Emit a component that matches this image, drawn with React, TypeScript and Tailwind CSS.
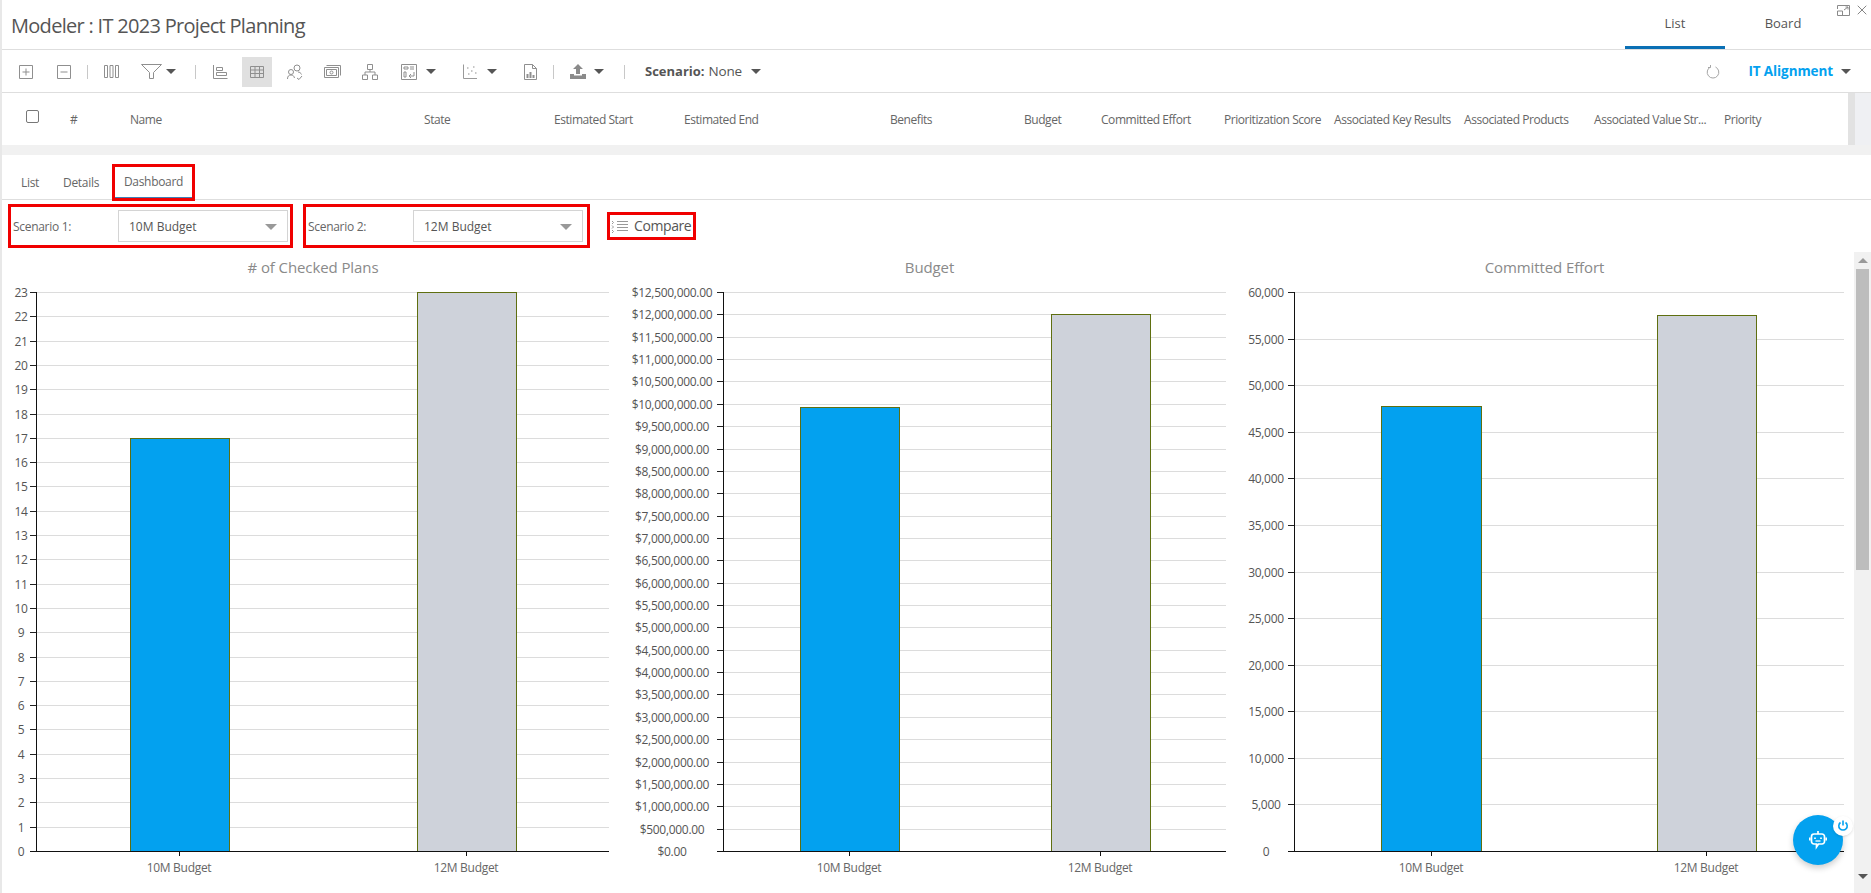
import { ReactNode } from "react";
import { X } from "lucide-react";

const font = "font-['Open_Sans','Noto_Sans',sans-serif]";

/* ---------------------- Toolbar icons ---------------------- */
function Ico({ w = 16, h = 16, children }: { w?: number; h?: number; children: ReactNode }) {
  return (
    <svg width={w} height={h} viewBox={`0 0 ${w} ${h}`} fill="none" stroke="#8f8f8f" strokeWidth="1" className="shrink-0">
      {children}
    </svg>
  );
}

function Caret({ className = "" }: { className?: string }) {
  return <span className={`inline-block w-0 h-0 border-x-[5px] border-x-transparent border-t-[5px] border-t-[#555] ${className}`} />;
}

function Sep() {
  return <span className="w-px h-[14px] bg-[#c8c8c8] shrink-0" />;
}

function Toolbar() {
  return (
    <div className="flex items-center h-[43px] pt-[1px] border-b border-[#dedede] pr-[20px] text-[#555]">
      <div className="ml-[17px] w-[38px]">
        <Ico w={14} h={14}><path d="M.5.5h13v13H.5zM7 3.500v7M3.500 7h7" /></Ico>
      </div>
      <div className="w-[30px]">
        <Ico w={14} h={14}><path d="M.5.5h13v13H.5zM3.500 7h7" /></Ico>
      </div>
      <Sep />
      <div className="ml-[16px] w-[37px]">
        <Ico w={15} h={13}><path d="M.5.5h3v12h-3zM6 .5h3v12H6zM11.500.5h3v12h-3z" /></Ico>
      </div>
      <div className="flex items-center w-[54px]">
        <Ico w={22} h={15}><path d="M.5.5h20l-8 8v6h-4v-6z" /></Ico>
        <Caret className="ml-[3px]" />
      </div>
      <Sep />
      <div className="ml-[17px] w-[29px]">
        <Ico w={15} h={14}><path d="M.5 0v13.500h14M3.500 2.500h6v3h-6zM3.500 7.500h10v3h-10z" /></Ico>
      </div>
      <div className="flex items-center justify-center w-[30px] h-[30px] bg-[#e0e0e0]">
        <Ico w={14} h={12}><path d="M.5.5h13v11H.5zM.5 4h13M.5 7.500h13M5 .5v11M9.500.5v11" /></Ico>
      </div>
      <div className="ml-[15px] w-[37px]">
        <Ico w={16} h={16}><circle cx="10" cy="4" r="3" /><circle cx="4" cy="8" r="2.500" /><path d="M.5 15c0-3 1.500-4 3.500-4s3 1 3.500 3M10 14l2 1.500 3-3.500M11 8c1.500 0 3 1 3.500 2.500" /></Ico>
      </div>
      <div className="w-[38px]">
        <Ico w={17} h={13}><path d="M2.500.5h14v10M.5 2.500h14v10H.5zM2.500 4.500h10v6h-10z" /><circle cx="7.500" cy="7.500" r="1.500" /></Ico>
      </div>
      <div className="w-[39px]">
        <Ico w={16} h={16}><path d="M5.500.5h5v5h-5zM8 5.500V8M3 11V8h10v3M.5 11h5v4.500h-5zM10.500 11h5v4.500h-5z" /></Ico>
      </div>
      <div className="flex items-center w-[62px]">
        <Ico w={16} h={16}><path d="M.5.5h15v15H.5zM3 3h4v2H3zM9 3h4M9 5h4M3 8h2v5H3zM8 12h5V8M8 12l2-2M8 12l2 2" /></Ico>
        <Caret className="ml-[9px]" />
      </div>
      <div className="flex items-center w-[61px]">
        <Ico w={14} h={15}><path d="M.5.500v14h14" stroke="#9a9a9a" /><path d="M4 4h1.500M10 3h1.500M8 7h1.500M5 10h1.500M12 9h1.500" /></Ico>
        <Caret className="ml-[10px]" />
      </div>
      <div className="w-[29px]">
        <Ico w={13} h={16}><path d="M.5.500h8l4 4v11H.5zM8.500.500v4h4" /><path d="M3.500 14V10M6.500 14V8M9.500 14V11" strokeWidth="2" /></Ico>
      </div>
      <Sep />
      <div className="flex items-center ml-[16px] w-[54px]">
        <svg width="16" height="15" viewBox="0 0 16 15" fill="#8a8a8a" className="shrink-0"><path d="M8 0l5 5H10v5H6V5H3zM0 10h4v1.500h8V10h4v5H0z" /></svg>
        <Caret className="ml-[8px]" />
      </div>
      <Sep />
      <div className={`flex items-center ml-[20px] text-[13px] ${font}`}>
        <span className="font-bold">Scenario:</span>
        <span className="ml-[4px] text-[13.5px] tracking-[-0.2px]">None</span>
        <Caret className="ml-[9px]" />
      </div>
      <div className="ml-auto flex items-center">
        <svg width="14" height="15" viewBox="0 0 14 15" fill="none" stroke="#a5a5a5"><path d="M9.500 3A5.800 5.800 0 1 1 4.500 3M4.500 1v2.500H2" /></svg>
        <span className={`ml-[28px] text-[13.5px] font-bold tracking-[-0.1px] text-[#03a1ef] ${font}`}>IT Alignment</span>
        <Caret className="ml-[8px]" />
      </div>
    </div>
  );
}

/* ---------------------- Table header ---------------------- */
const columns = [
  { label: "#", w: "w-[60px]" },
  { label: "Name", w: "w-[294px]" },
  { label: "State", w: "w-[130px]" },
  { label: "Estimated Start", w: "w-[130px]" },
  { label: "Estimated End", w: "w-[206px]" },
  { label: "Benefits", w: "w-[134px]" },
  { label: "Budget", w: "w-[77px]" },
  { label: "Committed Effort", w: "w-[123px]" },
  { label: "Prioritization Score", w: "w-[110px]" },
  { label: "Associated Key Results", w: "w-[130px]" },
  { label: "Associated Products", w: "w-[130px]" },
  { label: "Associated Value Str...", w: "w-[130px]" },
  { label: "Priority", w: "w-[60px]" },
];

function TableHeader() {
  return (
    <div className="flex h-[52px]">
      <div className={`flex-1 flex items-center pl-[24px] pt-[2px] text-[12px] text-[#666] tracking-[-0.45px] ${font}`}>
        <span className="w-[13px] h-[13px] border border-[#777] rounded-[2px] -mt-[7px] mr-[31px] shrink-0" />
        {columns.map((c) => (
          <span key={c.label} className={`${c.w} shrink-0 whitespace-nowrap`}>{c.label}</span>
        ))}
      </div>
      <div className="w-[7px] bg-[#e2e2e2]" />
      <div className="w-[16px] bg-[#eff0f3]" />
    </div>
  );
}

/* ---------------------- Charts ---------------------- */
type ChartProps = {
  title: string;
  width: number;
  axisX: number;
  endX: number;
  labelX: number;
  ticks: string[];
  bars: { x: number; w: number; top: number; fill: string }[];
  labels: number[];
};

const PLOT_TOP = 12;
const PLOT_BOTTOM = 571;

function Chart({ title, width, axisX, endX, labelX, ticks, bars, labels }: ChartProps) {
  const step = (PLOT_BOTTOM - PLOT_TOP) / (ticks.length - 1);
  return (
    <div style={{ width }} className="shrink-0">
      <div className={`h-[30px] pt-[4px] flex items-center justify-center text-[15px] text-[#8a8a8a] tracking-[-0.1px] ${font}`}>{title}</div>
      <svg width={width} height={613} className={`block ${font}`}>
        {ticks.map((t, i) => {
          const y = Math.round(PLOT_BOTTOM - step * i) + 0.5;
          return (
            <g key={t}>
              {i > 0 && <line x1={axisX} x2={endX} y1={y} y2={y} stroke="#dcdcdc" />}
              <line x1={axisX - 6} x2={axisX} y1={y} y2={y} stroke="#222" />
              <text x={labelX} y={y + 4} textAnchor="middle" fontSize="12" letterSpacing="-0.3" fill="#555">{t}</text>
            </g>
          );
        })}
        {bars.map((b) => (
          <rect key={b.x} x={b.x + 0.5} y={b.top + 0.5} width={b.w} height={PLOT_BOTTOM - b.top} fill={b.fill} stroke="#5f6f10" />
        ))}
        <line x1={axisX + 0.5} x2={axisX + 0.5} y1={PLOT_TOP} y2={PLOT_BOTTOM} stroke="#111" />
        <line x1={axisX - 6} x2={endX} y1={PLOT_BOTTOM + 0.5} y2={PLOT_BOTTOM + 0.5} stroke="#111" />
        {labels.map((x, i) => (
          <g key={x}>
            <line x1={x + 0.5} x2={x + 0.5} y1={PLOT_BOTTOM} y2={PLOT_BOTTOM + 5} stroke="#111" />
            <text x={x} y={PLOT_BOTTOM + 21} textAnchor="middle" fontSize="12" letterSpacing="-0.3" fill="#666">
              {i === 0 ? "10M Budget" : "12M Budget"}
            </text>
          </g>
        ))}
      </svg>
    </div>
  );
}

const planTicks = Array.from({ length: 24 }, (_, i) => String(i));
const budgetTicks = Array.from({ length: 26 }, (_, i) =>
  "$" + (i * 500000).toLocaleString("en-US", { minimumFractionDigits: 2 })
);
const effortTicks = Array.from({ length: 13 }, (_, i) => (i * 5000).toLocaleString("en-US"));

const BLUE = "#03a1ef";
const GREY = "#ced2da";

/* ---------------------- Page ---------------------- */
function Scenario({ label, value, box }: { label: string; value: string; box: string }) {
  return (
    <div className={`flex items-center h-[44px] border-[3px] border-[#f00000] ${box}`}>
      <span className="w-[107px] pl-[2px] pt-[2px] text-[12px] text-[#666] tracking-[-0.3px]">{label}</span>
      <div className="flex items-center justify-between w-[170px] h-[32px] border border-[#d4d4d4] pl-[10px] pr-[10px] pt-[1px] text-[12px] text-[#555]">
        {value}
        <Caret className="border-t-[#999] border-x-[6px] border-t-[6px]" />
      </div>
    </div>
  );
}

function Bot() {
  return (
    <div className="absolute left-[1791px] top-[815px] w-[50px] h-[50px] rounded-full bg-[#03a1ef] shadow-[0_3px_6px_rgba(0,0,0,0.2)] flex items-center justify-center">
      <svg width="18" height="20" viewBox="0 0 18 20" fill="none" stroke="#fff" strokeWidth="1.700">
        <path d="M9 1v3" />
        <path d="M5 4h8a2.500 2.500 0 0 1 2.500 2.500v5A2.500 2.500 0 0 1 13 14h-3.500L7.500 17V14H5a2.500 2.500 0 0 1-2.500-2.500v-5A2.500 2.500 0 0 1 5 4z" />
        <path d="M.8 7.500v3M17.200 7.500v3" />
        <path d="M6 7.500v1.500M12 7.500v1.500" />
        <path d="M6.500 11h5" strokeWidth="1.300" />
      </svg>
      <div className="absolute left-[40px] top-[1px] w-[20px] h-[20px] rounded-full bg-white shadow flex items-center justify-center">
        <svg width="12" height="12" viewBox="0 0 12 12" fill="none" stroke="#03a1ef" strokeWidth="1.600">
          <path d="M3.500 2.500a4.200 4.200 0 1 0 5 0M6 .5v5" />
        </svg>
      </div>
    </div>
  );
}

export default function App() {
  return (
    <div className={`relative w-[1871px] h-[893px] overflow-hidden bg-white border-l-2 border-[#e8e8e8] ${font}`}>
      {/* top bar */}
      <div className="relative flex items-center h-[50px] border-b border-[#dedede]">
        <h1 className="ml-[9px] mt-[3px] text-[20px] font-normal text-[#555] tracking-[-0.7px]">Modeler : IT 2023 Project Planning</h1>
        <div className="ml-auto flex h-full items-end text-[13px] text-[#555] pr-[30px]">
          <div className="w-[100px] h-[49px] pb-[13px] flex items-end justify-center border-b-[3px] border-[#0a70b5]">List</div>
          <div className="w-[116px] h-[49px] pb-[16px] flex items-end justify-center">Board</div>
        </div>
        <div className="absolute right-[1px] top-[2px] flex items-center gap-[4px]">
          <svg width="13" height="11" viewBox="0 0 13 11" fill="none" stroke="#8a8a8a"><path d="M.5 4V.5h12v10H.5V6h5v4.500M7 5l4-3M8.500 2h2.500v2.500" /></svg>
          <X size={16} strokeWidth={1.2} className="text-[#666]" />
        </div>
      </div>

      <Toolbar />
      <TableHeader />
      <div className="h-[10px] bg-[#f1f1f1]" />

      {/* detail tabs */}
      <div className="flex items-start h-[45px] pt-[9px] border-b border-[#dedede] text-[12px] text-[#666] tracking-[-0.3px] pl-[19px]">
        <span className="w-[42px] h-[37px] flex items-center">List</span>
        <span className="w-[49px] h-[37px] flex items-center">Details</span>
        <div className="w-[83px] h-[37px] border-[3px] border-[#f00000]">
          <div className="h-full flex items-center justify-center border-b border-[#3f7fb5]">Dashboard</div>
        </div>
      </div>

      {/* scenario row */}
      <div className="flex items-center h-[50px] pt-[2px] pl-[6px] text-[#555]">
        <Scenario label="Scenario 1:" value="10M Budget" box="w-[285px]" />
        <div className="ml-[10px]">
          <Scenario label="Scenario 2:" value="12M Budget" box="w-[287px]" />
        </div>
        <div className="flex items-center ml-[17px] h-[28px] w-[89px] border-[3px] border-[#f00000] pl-[1px]">
          <svg width="17" height="13" viewBox="0 0 17 13" fill="none" stroke="#999" className="shrink-0">
            <path d="M6 1.500h11M6 4.500h11M6 7.500h11M6 10.500h11M1 1l1.500 1.500L1 4M1 5.500l1.500 1.500L1 8.500M1 10l1.500 1.500L1 13" />
          </svg>
          <span className="ml-[6px] -mt-[2px] text-[14px] text-[#555] tracking-[-0.4px]">Compare</span>
        </div>
      </div>

      {/* charts */}
      <div className="flex">
        <Chart
          title="# of Checked Plans"
          width={622}
          axisX={34}
          endX={607}
          labelX={19}
          ticks={planTicks}
          bars={[
            { x: 128, w: 99, top: 158, fill: BLUE },
            { x: 415, w: 99, top: 12, fill: GREY },
          ]}
          labels={[177, 464]}
        />
        <Chart
          title="Budget"
          width={611}
          axisX={99}
          endX={602}
          labelX={48}
          ticks={budgetTicks}
          bars={[
            { x: 176, w: 99, top: 127, fill: BLUE },
            { x: 427, w: 99, top: 34, fill: GREY },
          ]}
          labels={[225, 476]}
        />
        <Chart
          title="Committed Effort"
          width={619}
          axisX={59}
          endX={609}
          labelX={31}
          ticks={effortTicks}
          bars={[
            { x: 146, w: 100, top: 126, fill: BLUE },
            { x: 422, w: 99, top: 35, fill: GREY },
          ]}
          labels={[196, 471]}
        />
      </div>

      {/* page scrollbar */}
      <div className="absolute right-0 top-[252px] bottom-0 w-[17px] bg-[#f1f1f1] flex flex-col items-center">
        <Caret className="mt-[6px] rotate-180 border-x-[4px] border-t-[4px] border-t-[#999]" />
        <div className="w-[13px] h-[301px] mt-[6px] bg-[#bdbdbd]" />
        <Caret className="mt-auto mb-[14px] border-x-[4px] border-t-[4px]" />
      </div>

      <Bot />
    </div>
  );
}
